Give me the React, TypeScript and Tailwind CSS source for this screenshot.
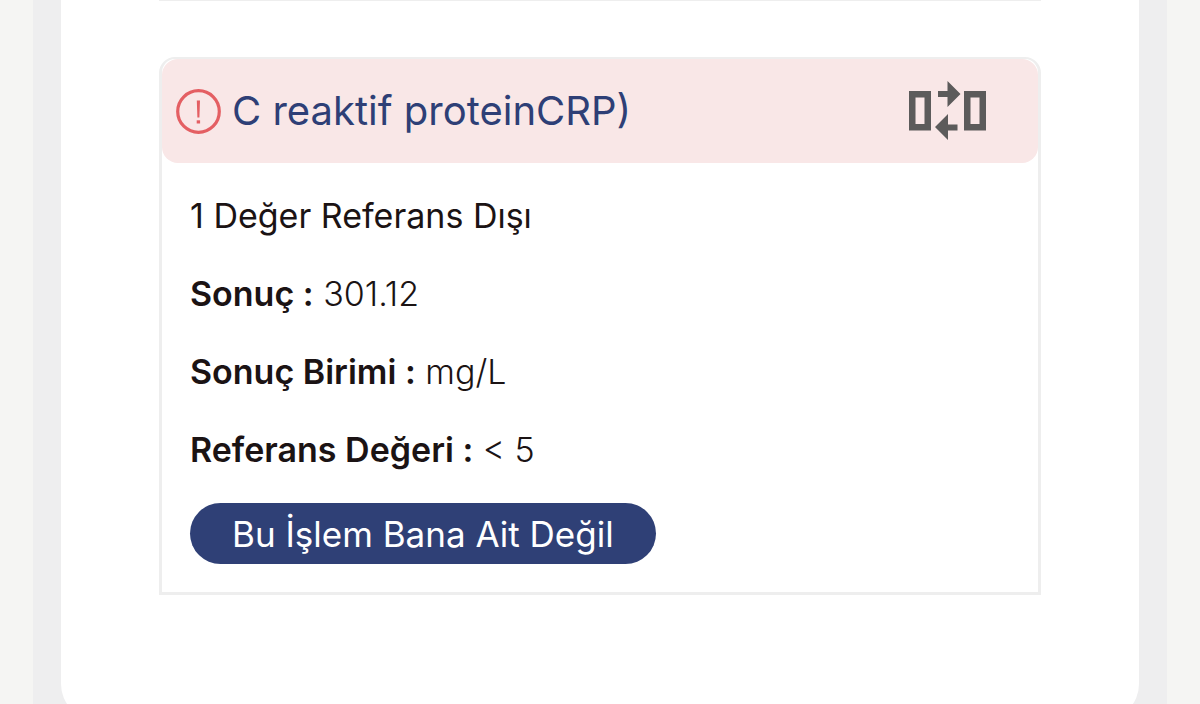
const RESULTS = [
  { label: "Sonuç :", value: "301.12" },
  { label: "Sonuç Birimi :", value: "mg/L" },
  { label: "Referans Değeri :", value: "< 5" },
];

function AlertIcon() {
  return (
    <svg viewBox="0 0 45 45" className="h-[45px] w-[45px] shrink-0" fill="none" aria-hidden="true">
      <circle cx="22.5" cy="22.5" r="20.8" stroke="#e45f63" strokeWidth="3.2" />
      <path d="M20.8 11.5h3.2l-.6 17h-2z" fill="#e45f63" />
      <path d="M20.700 31.300h3.400v3.200h-3.400z" fill="#e45f63" />
    </svg>
  );
}

function CompareIcon() {
  return (
    <svg viewBox="0 0 79 60" className="h-[60px] w-[79px]" aria-hidden="true">
      <g fill="none" stroke="#5c5b5b" strokeWidth="6.5">
        <path d="M4.25 13.25h15.5v33H4.25z" />
        <path d="M59.25 13.25h15.5v33h-15.5z" />
      </g>
      <g fill="#5c5b5b">
        <path d="M30 10h9.500V0L52.500 13 39.500 26V16H30z" />
        <path d="M49.500 43.500H40V33L27 46 40 59V49.500h9.500z" />
      </g>
    </svg>
  );
}

export default function App() {
  return (
    <div className="h-screen overflow-hidden bg-[#f5f5f3] px-[33px] font-['Inter','Liberation_Sans',sans-serif] text-[#1b1314]">
      <main className="min-h-screen bg-[#eeeeef] px-7">
        <div className="rounded-b-[36px] bg-white px-[98px] pb-[125px]">
          <hr className="h-px border-0 bg-[#eeeeee]" />

          <section className="mt-14 rounded-t-2xl border-[3px] border-t-2 border-[#eeeeee]">
            <header className="flex h-[104px] items-center gap-[11px] rounded-2xl bg-[#f9e7e7] pr-[51px] pl-[14px]">
              <AlertIcon />
              <h2 className="flex-1 text-[40px] leading-[52px] text-[#2e3f76]">
                C reaktif proteinCRP)
              </h2>
              <button type="button" aria-label="Karşılaştır">
                <CompareIcon />
              </button>
            </header>

            <div className="flex flex-col items-start gap-7 p-7 text-[34px] leading-[50px]">
              <p>1 Değer Referans Dışı</p>
              {RESULTS.map((item) => (
                <p key={item.label} className="font-light">
                  <b className="font-semibold">{item.label}</b> {item.value}
                </p>
              ))}
              <button type="button" className="h-[61px] rounded-full bg-[#2f4076] px-[42px] text-[35px] text-white">
                Bu İşlem Bana Ait Değil
              </button>
            </div>
          </section>
        </div>
      </main>
    </div>
  );
}
